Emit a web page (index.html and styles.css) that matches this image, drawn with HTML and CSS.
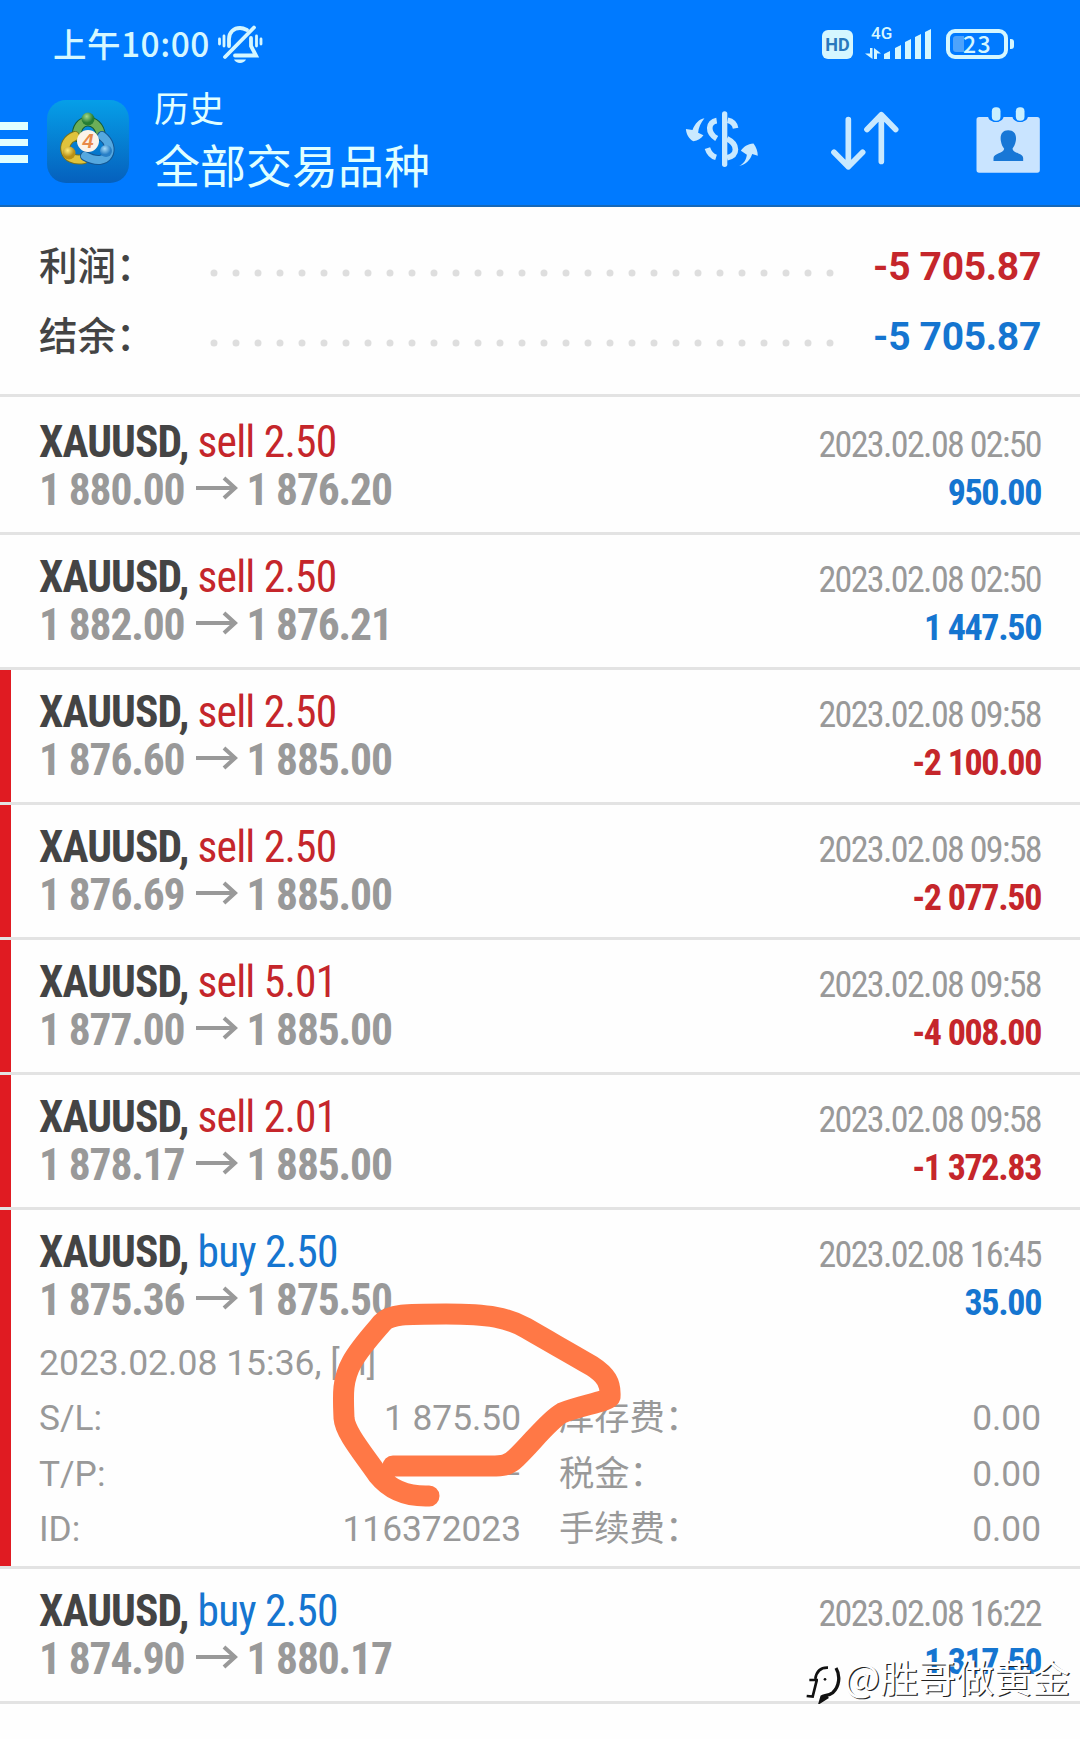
FILE: index.html
```
<!DOCTYPE html>
<html lang="zh-CN">

<head>
    <meta charset="UTF-8">
    <meta name="viewport" content="width=device-width, initial-scale=1.0">
    <title>历史</title>
    <link rel="stylesheet" href="styles.css">
</head>

<body>
    <header>
        <div class="status-bar">
            <span class="time">上午10:00</span>
            <svg class="bell" width="46" height="40" viewBox="0 0 46 40" fill="none" stroke="#d5f7ff" stroke-width="3.8" stroke-linecap="round">
                <path d="M8 32 L37 2.500"/>
                <path d="M12 21 V14 C12 7 17 3 23 3 C26 3 28 4 30 5"/>
                <path d="M34 13 V21 L39 30.500 H18"/>
                <path d="M17 34.500 H29 C27 39 19 39 17 34.500 Z" fill="#d5f7ff" stroke="none"/>
                <path d="M2.500 14 V19 M7 11 V21 M39.500 11 V21 M44 14 V19" stroke-width="2.800"/>
            </svg>
            <div class="status-right">
                <span class="hd">HD</span>
                <div class="signal">
                    <span class="net">4G</span>
                    <svg width="67" height="32" viewBox="0 0 67 32" fill="#d5f7ff">
                        <path d="M5 20 H7.500 V31 L0 25.500 H5 Z M9 31 V20 L16 25.500 H12 V31 Z"/>
                        <path d="M19 31 V26 L25 23 V31 Z M30 31 V20 L36 17 V31 Z M40 31 V14 L46 11 V31 Z M50 31 V9 L56 6 V31 Z M60 31 V4 L66 1 V31 Z"/>
                    </svg>
                </div>
                <div class="battery"><span class="level"></span><span class="percent">23</span></div>
                <span class="nub"></span>
            </div>
        </div>

        <div class="app-bar">
            <div class="menu"><span></span><span></span><span></span></div>
            <svg class="logo" width="82" height="83" viewBox="0 0 82 83">
                <defs>
                    <linearGradient id="sky" x1="0" y1="0" x2="0" y2="1">
                        <stop offset="0" stop-color="#069fe8"/>
                        <stop offset="1" stop-color="#0560bd"/>
                    </linearGradient>
                    <radialGradient id="green" cx=".4" cy=".3"><stop offset="0" stop-color="#a5d98b"/><stop offset="1" stop-color="#247d35"/></radialGradient>
                    <radialGradient id="gold" cx=".4" cy=".3"><stop offset="0" stop-color="#ffee7a"/><stop offset="1" stop-color="#b88f16"/></radialGradient>
                    <radialGradient id="blue" cx=".4" cy=".3"><stop offset="0" stop-color="#a8dcf8"/><stop offset="1" stop-color="#287fc6"/></radialGradient>
                </defs>
                <rect width="82" height="83" rx="19" fill="url(#sky)"/>
                <g fill="none" stroke-width="8" stroke-linecap="round">
                    <path d="M30 37 C28 17 52 16 54 36" stroke="#145c35" stroke-width="10"/>
                    <path d="M30 37 C28 17 52 16 54 36" stroke="#6cae58"/>
                    <path d="M28 36 C12 42 16 63 37 59" stroke="#76721f" stroke-width="10"/>
                    <path d="M28 36 C12 42 16 63 37 59" stroke="#dfc33c"/>
                    <path d="M55 36 C70 47 62 69 38 56" stroke="#135693" stroke-width="10"/>
                    <path d="M55 36 C70 47 62 69 38 56" stroke="#55a8df"/>
                </g>
                <circle cx="41" cy="19" r="6.500" fill="url(#green)"/>
                <circle cx="22" cy="53" r="6.500" fill="url(#gold)"/>
                <circle cx="59" cy="51" r="6" fill="url(#blue)"/>
                <circle cx="41" cy="41" r="11" fill="#fbf3ea"/>
                <text x="41" y="48" text-anchor="middle" font-family="Liberation Sans, sans-serif" font-size="20" font-style="italic" font-weight="bold" fill="#e88a4a">4</text>
            </svg>
            <div class="titles">
                <span class="sub">历史</span>
                <span class="main">全部交易品种</span>
            </div>
            <div class="actions">
                <svg width="75" height="58" viewBox="30 30 225 175" fill="#c9e9ff">
                    <path d="M88 55 C72 58 60 70 52 90 L32 87 C34 105 42 118 55 124 C68 122 78 116 85 106 L69 99 C70 83 77 69 88 55 Z"/>
                    <path d="M193 199 C208 190 214 180 216 165 L198 153 C206 140 218 133 236 131 C244 142 249 154 249 168 L232 163 C227 180 214 194 193 199 Z"/>
                    <path d="M149 42 V194" fill="none" stroke="#c9e9ff" stroke-width="16" stroke-linecap="round"/>
                    <path d="M125 62 C98 66 96 98 125 116 M97 145 C102 161 110 169 123 173 M158 61 C172 64 180 73 182 85 M156 117 C190 134 190 166 156 174" fill="none" stroke="#c9e9ff" stroke-width="17"/>
                </svg>
                <svg width="70" height="62" viewBox="465 30 210 185" fill="none" stroke="#c9e9ff" stroke-width="17" stroke-linecap="round" stroke-linejoin="round">
                    <path d="M520 58 V200 M477 156 L520 200 L563 156"/>
                    <path d="M619 184 V44 M576 88 L619 44 L662 88"/>
                </svg>
                <svg width="67" height="68" viewBox="945 318 200 204">
                    <path d="M957 351 H984 C986 370 1028 370 1030 351 H1057 C1059 370 1101 370 1103 351 H1131 Q1139 351 1139 359 V510 Q1139 518 1131 518 H957 Q949 518 949 510 V359 Q949 351 957 351 Z" fill="#c9e4ff"/>
                    <rect x="991" y="319" width="33" height="47" rx="14" fill="#007aff"/>
                    <rect x="1063" y="319" width="33" height="47" rx="14" fill="#007aff"/>
                    <rect x="995" y="322" width="26" height="40" rx="12" fill="#c9f0ff"/>
                    <rect x="1067" y="322" width="26" height="40" rx="12" fill="#c9f0ff"/>
                    <path d="M1044 391 C1062 391 1070 404 1067 422 C1065 435 1060 440 1057 446 C1058 459 1089 460 1089 474 V483 H1000 V474 C1000 460 1031 459 1032 446 C1028 440 1024 435 1022 422 C1019 404 1027 391 1044 391 Z" fill="#1877d6"/>
                </svg>
            </div>
        </div>
    </header>

    <section class="summary">
        <div class="total">
            <span class="label">利润：</span>
            <svg class="dots" width="624" height="8"><path d="M4 4 H621" stroke="#dedede" stroke-width="7" stroke-linecap="round" stroke-dasharray="0 22"/></svg>
            <span class="value red">-5 705.87</span>
        </div>
        <div class="total">
            <span class="label">结余：</span>
            <svg class="dots" width="624" height="8"><path d="M4 4 H621" stroke="#dedede" stroke-width="7" stroke-linecap="round" stroke-dasharray="0 22"/></svg>
            <span class="value blue">-5 705.87</span>
        </div>
    </section>

    <main>
        <div class="deal first">
            <div class="line"><span class="symbol">XAUUSD, <span class="side red">sell 2.50</span></span><span class="date">2023.02.08 02:50</span></div>
            <div class="line"><span class="price">1 880.00<svg class="arrow" viewBox="0 0 42 24"><path d="M0 12 H39 M28 2 L39 12 L28 22"/></svg>1 876.20</span><span class="amount blue">950.00</span></div>
        </div>
        <div class="deal">
            <div class="line"><span class="symbol">XAUUSD, <span class="side red">sell 2.50</span></span><span class="date">2023.02.08 02:50</span></div>
            <div class="line"><span class="price">1 882.00<svg class="arrow" viewBox="0 0 42 24"><path d="M0 12 H39 M28 2 L39 12 L28 22"/></svg>1 876.21</span><span class="amount blue">1 447.50</span></div>
        </div>
        <div class="deal stop">
            <div class="line"><span class="symbol">XAUUSD, <span class="side red">sell 2.50</span></span><span class="date">2023.02.08 09:58</span></div>
            <div class="line"><span class="price">1 876.60<svg class="arrow" viewBox="0 0 42 24"><path d="M0 12 H39 M28 2 L39 12 L28 22"/></svg>1 885.00</span><span class="amount red">-2 100.00</span></div>
        </div>
        <div class="deal stop">
            <div class="line"><span class="symbol">XAUUSD, <span class="side red">sell 2.50</span></span><span class="date">2023.02.08 09:58</span></div>
            <div class="line"><span class="price">1 876.69<svg class="arrow" viewBox="0 0 42 24"><path d="M0 12 H39 M28 2 L39 12 L28 22"/></svg>1 885.00</span><span class="amount red">-2 077.50</span></div>
        </div>
        <div class="deal stop">
            <div class="line"><span class="symbol">XAUUSD, <span class="side red">sell 5.01</span></span><span class="date">2023.02.08 09:58</span></div>
            <div class="line"><span class="price">1 877.00<svg class="arrow" viewBox="0 0 42 24"><path d="M0 12 H39 M28 2 L39 12 L28 22"/></svg>1 885.00</span><span class="amount red">-4 008.00</span></div>
        </div>
        <div class="deal stop">
            <div class="line"><span class="symbol">XAUUSD, <span class="side red">sell 2.01</span></span><span class="date">2023.02.08 09:58</span></div>
            <div class="line"><span class="price">1 878.17<svg class="arrow" viewBox="0 0 42 24"><path d="M0 12 H39 M28 2 L39 12 L28 22"/></svg>1 885.00</span><span class="amount red">-1 372.83</span></div>
        </div>
        <div class="deal stop open">
            <div class="line"><span class="symbol">XAUUSD, <span class="side blue">buy 2.50</span></span><span class="date">2023.02.08 16:45</span></div>
            <div class="line"><span class="price">1 875.36<svg class="arrow" viewBox="0 0 42 24"><path d="M0 12 H39 M28 2 L39 12 L28 22"/></svg>1 875.50</span><span class="amount blue">35.00</span></div>
            <div class="opened">2023.02.08 15:36, [sl]</div>
            <div class="details">
                <div class="pair"><span>S/L:</span><span>1 875.50</span></div>
                <div class="pair"><span>库存费：</span><span>0.00</span></div>
                <div class="pair"><span>T/P:</span><span>—</span></div>
                <div class="pair"><span>税金：</span><span>0.00</span></div>
                <div class="pair"><span>ID:</span><span>116372023</span></div>
                <div class="pair"><span>手续费：</span><span>0.00</span></div>
            </div>
            <!-- hand drawn mark around the stop loss -->
            <svg class="scribble" width="300" height="220" viewBox="325 1295 300 220">
                <path d="M429 1496 C400 1497 386 1485 378 1475 C362 1452 345 1432 344 1418 C343 1395 342 1380 352 1362 C359 1349 369 1338 382 1323 C390 1314 405 1314 446 1314 C490 1314 508 1318 526 1328 C550 1342 570 1353 592 1366 C606 1375 611 1383 610 1397 C609 1401 579 1406 562 1413 C548 1421 532 1443 516 1458 C508 1466 502 1466 491 1466 L393 1466"/>
            </svg>
        </div>
        <div class="deal">
            <div class="line"><span class="symbol">XAUUSD, <span class="side blue">buy 2.50</span></span><span class="date">2023.02.08 16:22</span></div>
            <div class="line"><span class="price">1 874.90<svg class="arrow" viewBox="0 0 42 24"><path d="M0 12 H39 M28 2 L39 12 L28 22"/></svg>1 880.17</span><span class="amount blue">1 317.50</span></div>
            <div class="watermark">
                <svg width="37" height="40" viewBox="15 40 111 120" fill="none" stroke="#111">
                    <path d="M20 136 L38 138 L50 90 M28 88 H54 M46 84 C50 60 62 50 84 51" stroke-width="8"/>
                    <path d="M108 52 C122 75 118 108 98 126 C86 136 70 134 66 138 L62 152 L84 138" stroke-width="10"/>
                    <circle cx="75" cy="86" r="4" fill="#111" stroke="none"/>
                </svg>
                <span>@胜哥做黄金</span>
            </div>
        </div>
    </main>
</body>

</html>
```
FILE: styles.css
```
* {
    box-sizing: border-box;
}

body {
    margin: 0;
    background-color: #fefefe;
    font-family: Roboto, "Noto Sans CJK SC", sans-serif;
    color: #999;
}

svg {
    flex-shrink: 0;
}

.red {
    color: #c5262b;
}

.blue {
    color: #1575d0;
}

/* header */
header {
    height: 207px;
    background-color: #007aff;
    border-bottom: 2px solid #1668b8;
}

.status-bar {
    display: flex;
    align-items: flex-start;
    height: 80px;
    padding: 24px 66px 0 53px;
    color: #d5f7ff;
}

.time {
    width: 164px;
    margin-top: -2px;
    font-family: "Noto Sans CJK SC", sans-serif;
    font-size: 33.500px;
    font-weight: 500;
    line-height: 42px;
    letter-spacing: 0.5px;
    white-space: nowrap;
}

.bell {
    margin-top: 1px;
}

.status-right {
    display: flex;
    align-items: center;
    margin-left: auto;
    height: 40px;
}

.hd {
    width: 31px;
    height: 29px;
    border-radius: 6px;
    background-color: #d5f7ff;
    color: #2a79bd;
    font-size: 18px;
    font-weight: 700;
    line-height: 30px;
    text-align: center;
}

.signal {
    position: relative;
    height: 32px;
    margin: 0 14px 0 12px;
}

.net {
    position: absolute;
    left: 6px;
    top: -5px;
    font-size: 17px;
    font-weight: 500;
}

.battery {
    display: flex;
    align-items: center;
    width: 62px;
    height: 30px;
    padding-left: 3px;
    border: 4px solid #d5f7ff;
    border-radius: 9px;
}

.level {
    width: 11px;
    height: 16px;
    margin-right: -1px;
    border-radius: 3px 0 0 3px;
    background-color: #4ea3fb;
}

.percent {
    margin-top: -2px;
    font-family: "Noto Sans CJK SC", sans-serif;
    font-size: 23px;
    font-weight: 500;
    line-height: 22px;
    letter-spacing: 1.5px;
}

.nub {
    width: 4px;
    height: 10px;
    margin-left: 2px;
    border-radius: 0 3px 3px 0;
    background-color: #d5f7ff;
}

.app-bar {
    display: flex;
    align-items: flex-start;
    padding-right: 38px;
}

.menu {
    display: flex;
    flex-direction: column;
    gap: 9px;
    width: 28px;
    margin: 42px 19px 0 0;
}

.menu span {
    height: 7.600px;
    background-color: #e0ffff;
}

.logo {
    margin-top: 20px;
}

.titles {
    display: flex;
    flex-direction: column;
    margin: 4px 0 0 25px;
    font-family: "Noto Sans CJK SC", sans-serif;
    color: #e0ffff;
}

.sub {
    font-size: 35px;
    line-height: 46px;
}

.main {
    font-size: 46px;
    line-height: 66px;
}

.actions {
    display: flex;
    align-items: flex-start;
    gap: 70px;
    margin: 26px 0 0 auto;
}

.actions svg {
    margin-top: 4px;
}

.actions svg:last-child {
    margin: 0 0 0 5px;
}

/* totals */
.summary {
    height: 190px;
    padding: 25px 39px 0 39px;
    border-bottom: 3px solid #e3e3e3;
}

.total {
    display: flex;
    align-items: center;
    height: 70px;
}

.label {
    width: 171px;
    margin-top: -9px;
    font-family: "Noto Sans CJK SC", sans-serif;
    font-size: 38.500px;
    font-weight: 500;
    color: #444;
}

.dots {
    margin-top: 12px;
}

.value {
    margin-left: auto;
    font-size: 39px;
    font-weight: 700;
    letter-spacing: -0.3px;
}

/* deals */
.deal {
    position: relative;
    height: 135px;
    padding: 19px 39px 0 39px;
    border-bottom: 3px solid #e3e3e3;
    font-family: "Roboto Condensed", Roboto, sans-serif;
}

.first {
    height: 138px;
    padding-top: 22px;
}

.stop::before {
    content: "";
    position: absolute;
    left: 0;
    top: 0;
    bottom: 0;
    width: 11px;
    background-color: #e01b22;
}

.line {
    display: flex;
    justify-content: space-between;
    align-items: baseline;
    height: 48px;
    line-height: 48px;
    white-space: nowrap;
}

.symbol {
    font-size: 43.500px;
    font-weight: 700;
    color: #444;
    letter-spacing: -0.9px;
}

.side {
    font-weight: 400;
    letter-spacing: -0.8px;
}

.price {
    font-size: 43.500px;
    font-weight: 700;
    letter-spacing: -1.150px;
}

.arrow {
    width: 42px;
    height: 24px;
    margin: 0 8px 0 12px;
    vertical-align: 5px;
    fill: none;
    stroke: #999;
    stroke-width: 4;
}

.date {
    font-size: 36px;
    letter-spacing: -1.650px;
}

.amount {
    font-size: 36px;
    font-weight: 700;
    letter-spacing: -1.350px;
}

.open {
    height: 359px;
}

.opened {
    margin-top: 10px;
    font-family: Roboto, sans-serif;
    font-size: 35.500px;
    line-height: 57px;
}

.details {
    display: grid;
    grid-template-columns: 482px 482px;
    column-gap: 38px;
    font-family: Roboto, "Noto Sans CJK SC", sans-serif;
    font-size: 35.300px;
    line-height: 55.500px;
    margin-top: -1px;
}

.pair {
    display: flex;
    justify-content: space-between;
    height: 55.500px;
}

.scribble {
    position: absolute;
    left: 325px;
    top: 85px;
    fill: none;
    stroke: #ff7846;
    stroke-width: 21;
    stroke-linecap: round;
    stroke-linejoin: round;
}

.watermark {
    position: absolute;
    right: 10px;
    top: 79px;
    display: flex;
    align-items: center;
    font-family: "Noto Sans CJK SC", sans-serif;
    font-size: 38px;
    line-height: 48px;
    color: #fff;
    text-shadow: 1.2px 1.2px 0 #222;
}

.watermark svg {
    margin: 16px 2px 0 0;
}
```
